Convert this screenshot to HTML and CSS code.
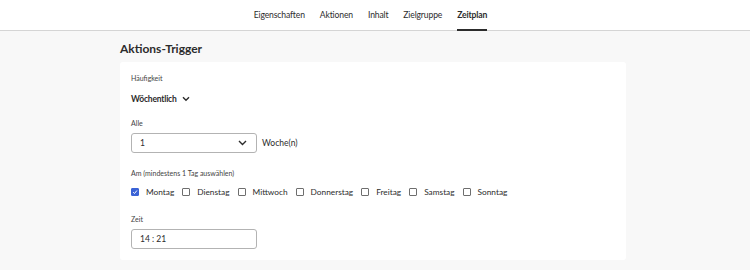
FILE: index.html
```html
<!DOCTYPE html>
<html lang="de">
<head>
  <meta charset="UTF-8">
  <title>Zeitplan</title>
  <link rel="stylesheet" href="styles.css">
</head>
<body>
  <nav class="tabs">
    <a class="tab">Eigenschaften</a>
    <a class="tab">Aktionen</a>
    <a class="tab">Inhalt</a>
    <a class="tab">Zielgruppe</a>
    <a class="tab active">Zeitplan</a>
  </nav>

  <main class="content">
    <h2 class="section-title">Aktions-Trigger</h2>
    <div class="card">
      <div class="field freq">
        <label class="label">Häufigkeit</label>
        <div class="picker">Wöchentlich
          <svg width="8" height="6" viewBox="0 0 8 6"><path d="M1 1.2l3 3 3-3" fill="none" stroke="#2c2c2c" stroke-width="1.4"/></svg>
        </div>
      </div>

      <div class="field">
        <label class="label">Alle</label>
        <div class="row">
          <div class="input select">1
            <svg width="9" height="6" viewBox="0 0 9 6"><path d="M1 1l3.5 3.5L8 1" fill="none" stroke="#2c2c2c" stroke-width="1.4"/></svg>
          </div>
          <span class="unit">Woche(n)</span>
        </div>
      </div>

      <div class="field weekdays">
        <label class="label">Am (mindestens 1 Tag auswählen)</label>
        <div class="days">
          <label class="day"><span class="box checked"><svg width="8" height="8" viewBox="0 0 8 8"><path d="M1.5 4.2l1.8 1.8L6.6 2" fill="none" stroke="#fff" stroke-width="1.3"/></svg></span>Montag</label>
          <label class="day"><span class="box"></span>Dienstag</label>
          <label class="day"><span class="box"></span>Mittwoch</label>
          <label class="day"><span class="box"></span>Donnerstag</label>
          <label class="day"><span class="box"></span>Freitag</label>
          <label class="day"><span class="box"></span>Samstag</label>
          <label class="day"><span class="box"></span>Sonntag</label>
        </div>
      </div>

      <div class="field">
        <label class="label">Zeit</label>
        <div class="input">14 : 21</div>
      </div>
    </div>
  </main>
</body>
</html>
```

FILE: styles.css
```css
body { margin: 0; background: #f8f8f8; font-family: Lato, "Open Sans", sans-serif; color: #2c2c2c; }
.tabs { height: 31px; background: #fff; border-bottom: 1px solid #d5d5d5; display: flex; justify-content: center; padding-right: 9px; box-sizing: border-box; }
.tab { font-size: 8.6px; letter-spacing: -0.15px; padding: 10px 7.5px 0; color: #2c2c2c; position: relative; }
.tab.active { font-weight: 700; }
.tab.active::after { content: ""; position: absolute; left: 7.5px; right: 7.5px; bottom: -1px; height: 2px; background: #2c2c2c; }
.content { width: 506px; margin: 0 auto; padding: 12px 0 0; position: relative; left: -2px; }
.section-title { font-size: 12px; font-weight: 700; margin: 0 0 7px; line-height: 12px; }
.card { background: #fff; border-radius: 3px; padding: 11px 11px 0; height: 198px; box-sizing: border-box; }
.field { margin-bottom: 15px; }
.field.freq { margin-bottom: 8px; }
.label { display: block; font-size: 7px; color: #444; margin-bottom: 5px; line-height: 10px; }
.freq .label { margin-bottom: 5px; }
.picker { font-size: 8.5px; font-weight: 700; letter-spacing: -0.2px; display: flex; align-items: center; gap: 5px; height: 22px; }
.row { display: flex; align-items: center; gap: 5px; }
.input { width: 126px; height: 20px; border: 1px solid #b3b3b3; border-radius: 3px; box-sizing: border-box; font-size: 8.5px; padding: 0 8px; display: flex; align-items: center; justify-content: space-between; }
.select { padding-right: 9px; }
.unit { font-size: 8.5px; }
.weekdays { margin-bottom: 15px; }
.weekdays .label { margin-bottom: 7px; }
.days { display: flex; gap: 8px; height: 14px; align-items: center; }
.day { display: flex; align-items: center; gap: 7px; font-size: 8.3px; }
.box { width: 8px; height: 8px; border: 1px solid #6e6e6e; border-radius: 1px; box-sizing: border-box; display: flex; align-items: center; justify-content: center; }
.box.checked { background: #3b63d6; border-color: #3b63d6; }
```
